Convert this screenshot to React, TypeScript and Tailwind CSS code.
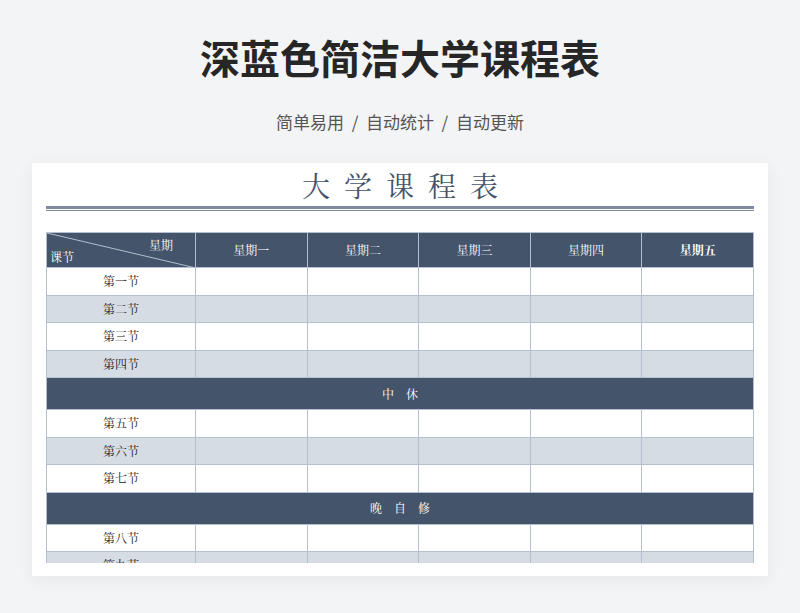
export default function App() {
  const serif = { fontFamily: '"Noto Serif CJK SC","Liberation Serif","Noto Sans CJK SC",serif' };
  const days = ["星期一", "星期二", "星期三", "星期四", "星期五"];
  const Row = ({ label, alt }: { label: string; alt: boolean }) => (
    <div className={`flex h-[27.5px] border-b border-[#b4c0d0] ${alt ? "bg-[#d6dce4]" : "bg-white"}`}>
      <div className="w-[149px] flex items-center justify-center text-[12px] text-[#222] border-r border-[#b4c0d0]" style={serif}>{label}</div>
      {days.map((d, i) => (
        <div key={d} className={`flex-1 ${i < 4 ? "border-r border-[#b4c0d0]" : ""}`} />
      ))}
    </div>
  );
  const Break = ({ t }: { t: string }) => (
    <div className="h-[32px] bg-[#44546a] border-b border-[#b4c0d0] flex items-center justify-center text-white text-[12px] tracking-[1em] pl-[1em]" style={serif}>{t}</div>
  );
  return (
    <div className="w-[800px] h-[613px] bg-[#f3f4f6] flex flex-col items-center overflow-hidden" style={{ fontFamily: '"Noto Sans CJK SC",sans-serif' }}>
      <h1 className="mt-[31px] text-[40px] leading-[52px] font-bold text-[#262626]">深蓝色简洁大学课程表</h1>
      <div className="mt-[27px] text-[17px] text-[#555] leading-[24px]">简单易用 &nbsp;/&nbsp; 自动统计 &nbsp;/&nbsp; 自动更新</div>
      <div className="mt-[29px] w-[736px] h-[413px] bg-white shadow-[0_4px_16px_rgba(0,0,0,0.06)] px-[14px] flex flex-col">
        <div className="h-[42px] flex items-end justify-center text-[28px] text-[#44546a] tracking-[0.5em] pl-[0.5em] leading-[40px]" style={serif}>大学课程表</div>
        <div className="h-[3px] bg-[#7f8aa0] mt-[1px]" />
        <div className="h-[1px] bg-[#7f8aa0] mt-[1px]" />
        <div className="mt-[21px] border-l border-r border-t border-[#b4c0d0] overflow-hidden h-[331px]">
          <div className="flex h-[35px] bg-[#44546a] border-b border-[#b4c0d0] text-white text-[12px]" style={serif}>
            <div className="relative w-[149px] border-r border-[#b4c0d0]">
              <svg className="absolute inset-0" width="149" height="35"><line x1="0" y1="0" x2="149" y2="35" stroke="#b4c0d0" strokeWidth="1" /></svg>
              <span className="absolute right-[22px] top-[3px]">星期</span>
              <span className="absolute left-[3px] bottom-[1px]">课节</span>
            </div>
            {days.map((d, i) => (
              <div key={d} className={`flex-1 flex items-center justify-center ${i < 4 ? "border-r border-[#b4c0d0]" : "font-bold"}`}>{d}</div>
            ))}
          </div>
          <Row label="第一节" alt={false} />
          <Row label="第二节" alt={true} />
          <Row label="第三节" alt={false} />
          <Row label="第四节" alt={true} />
          <Break t="中休" />
          <Row label="第五节" alt={false} />
          <Row label="第六节" alt={true} />
          <Row label="第七节" alt={false} />
          <Break t="晚自修" />
          <Row label="第八节" alt={false} />
          <Row label="第九节" alt={true} />
        </div>
      </div>
    </div>
  );
}
